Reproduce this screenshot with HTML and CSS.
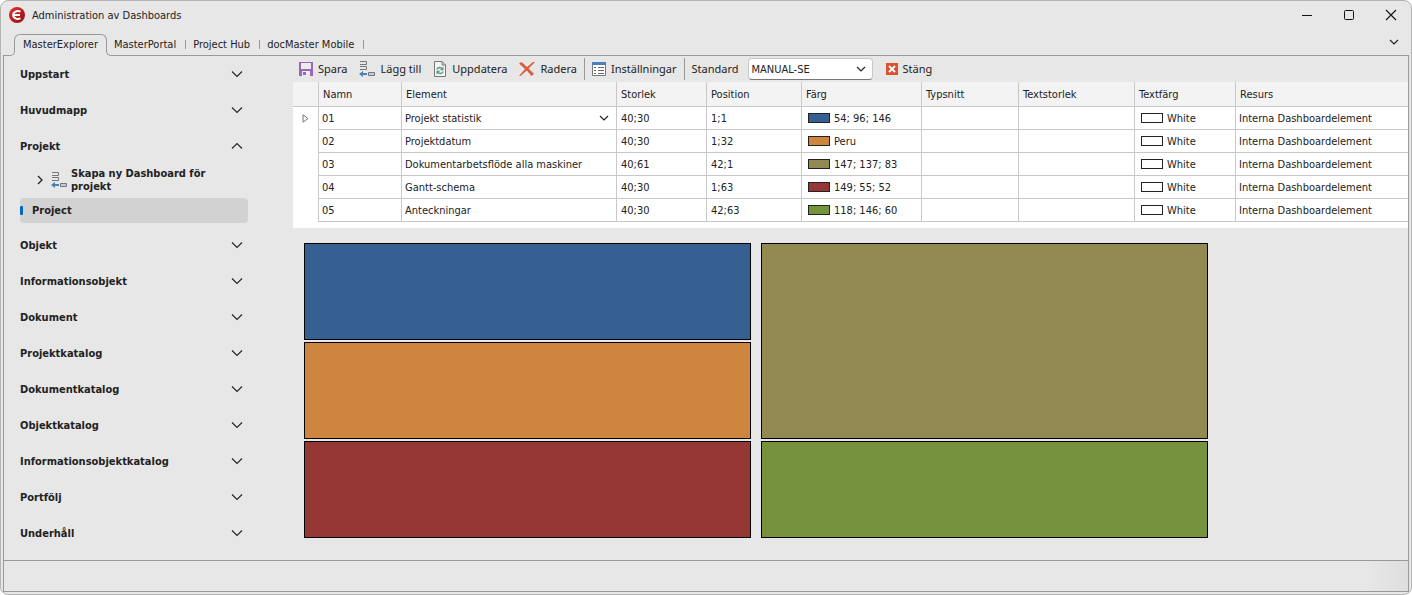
FILE: index.html
```html
<!DOCTYPE html>
<html lang="sv">
<head>
<meta charset="utf-8">
<title>Administration av Dashboards</title>
<link rel="stylesheet" href="styles.css">
</head>
<body>
<svg class="defs" aria-hidden="true">
  <symbol id="down" viewBox="0 0 12 12"><path d="M1 3.500 6 8.500 11 3.500" fill="none" stroke="#222" stroke-width="1.100"/></symbol>
  <symbol id="up" viewBox="0 0 12 12"><path d="M1 8.500 6 3.500 11 8.500" fill="none" stroke="#222" stroke-width="1.100"/></symbol>
  <symbol id="small" viewBox="0 0 10 10"><path d="M1 3 5 7 9 3" fill="none" stroke="#222" stroke-width="1.200"/></symbol>
  <symbol id="add" viewBox="0 0 16 16"><path d="M1 .5h6.500v3H1M1 5.500h6.500v3H1" fill="none" stroke="#777"/><path d="M0 13 4 10v2h4v2H4v2z" fill="#4a80bd"/><path d="M9.500 11.500h6v3h-6z" fill="#b9cfe6" stroke="#777"/></symbol>
</svg>
<div class="window">
  <header class="titlebar">
    <svg class="logo" viewBox="0 0 16 16"><defs><linearGradient id="red" x2="1" y2="1"><stop stop-color="#e5332f"/><stop offset="1" stop-color="#8e0f14"/></linearGradient></defs><circle cx="8" cy="8" r="8" fill="url(#red)"/><path d="M11.500 4.600Q9.500 3.800 7.500 4.200 4.200 5 4.200 8t3.300 3.800q2 .4 4-.4M5 8h6" fill="none" stroke="#fff" stroke-width="2"/></svg>
    <h1>Administration av Dashboards</h1>
    <div class="controls">
      <button aria-label="Minimera"><svg viewBox="0 0 12 12"><path d="M1 6.500h10" stroke="#111"/></svg></button>
      <button aria-label="Maximera"><svg viewBox="0 0 12 12"><rect x="1.500" y="1.500" width="9" height="9" rx="1" fill="none" stroke="#111"/></svg></button>
      <button aria-label="Stäng fönster"><svg viewBox="0 0 12 12"><path d="m1 1 10 10M11 1 1 11" stroke="#111" stroke-width="1.100"/></svg></button>
    </div>
  </header>
  <div class="tabs">
    <button class="tab active">MasterExplorer</button>
    <button class="tab">MasterPortal</button>
    <button class="tab">Project Hub</button>
    <button class="tab">docMaster Mobile</button>
    <button class="more" aria-label="Fler flikar"><svg><use href="#small"/></svg></button>
  </div>
  <div class="frame">
    <div class="main">
      <nav class="sidebar">
        <button class="group">Uppstart<svg><use href="#down"/></svg></button>
        <button class="group">Huvudmapp<svg><use href="#down"/></svg></button>
        <button class="group">Projekt<svg><use href="#up"/></svg></button>
        <button class="child"><svg class="expand" viewBox="0 0 6 10"><path d="M1 1 5 5 1 9" fill="none" stroke="#222" stroke-width="1.300"/></svg><svg class="icon"><use href="#add"/></svg><span>Skapa ny Dashboard för projekt</span></button>
        <button class="selected">Project</button>
        <button class="group">Objekt<svg><use href="#down"/></svg></button>
        <button class="group">Informationsobjekt<svg><use href="#down"/></svg></button>
        <button class="group">Dokument<svg><use href="#down"/></svg></button>
        <button class="group">Projektkatalog<svg><use href="#down"/></svg></button>
        <button class="group">Dokumentkatalog<svg><use href="#down"/></svg></button>
        <button class="group">Objektkatalog<svg><use href="#down"/></svg></button>
        <button class="group">Informationsobjektkatalog<svg><use href="#down"/></svg></button>
        <button class="group">Portfölj<svg><use href="#down"/></svg></button>
        <button class="group">Underhåll<svg><use href="#down"/></svg></button>
      </nav>
      <main class="content">
        <div class="toolbar">
          <button><svg viewBox="0 0 14 14"><path d="M0 0h14v14H0z" fill="#9867b7"/><path d="M2 1h10v6H2zM3 9h8v5H3z" fill="#ececec"/><path d="M4 10h3v3H4z" fill="#9867b7"/></svg>Spara</button>
          <button><svg class="icon"><use href="#add"/></svg>Lägg till</button>
          <button><svg class="page" viewBox="0 0 14 16"><path d="M1.500.5H9l3.500 3.500v11.500h-11zM9 .5V4h3.500" fill="#f4f4f4" stroke="#777"/><path d="M3.800 8.500Q5 6 7.500 6.600l1.500.8M10.300 10.500Q9 13 6.500 12.400L5 11.600" fill="none" stroke="#4f9a7d" stroke-width="1.300"/><path d="M10.500 5.500v3.800H6.800zM3.500 13.500V9.700h3.700z" fill="#4f9a7d"/></svg>Uppdatera</button>
          <button><svg class="icon" viewBox="0 0 16 14"><path d="M0 1.500 2.500 0 8 5 14 0h2L9.500 6.500 15 12l-2.500 2L7.800 8.500 1.500 14H0l6-7z" fill="#dc5b3c"/></svg>Radera</button>
          <span class="divider"></span>
          <button><svg viewBox="0 0 14 14"><path d="M.5.5h13v13H.5z" fill="#fff" stroke="#777"/><path d="M0 0h14v3H0z" fill="#4a80bd"/><path d="M2 5.500h2M2 8.500h2M2 11.500h2M6 5.500h6M6 8.500h6M6 11.500h6" stroke="#666"/></svg>Inställningar</button>
          <span class="divider"></span>
          <label for="profile">Standard</label>
          <span class="combo"><select id="profile"><option>MANUAL-SE</option></select><svg><use href="#small"/></svg></span>
          <button class="close"><svg viewBox="0 0 12 12"><path d="M0 0h12v12H0z" fill="#d9532f"/><path d="m3 3 6 6M9 3 3 9" stroke="#fff" stroke-width="1.800"/></svg>Stäng</button>
        </div>
        <div class="table-area">
          <table>
            <colgroup><col class="c-mark"><col class="c-name"><col class="c-element"><col class="c-size"><col class="c-pos"><col class="c-color"><col class="c-font"><col class="c-textsize"><col class="c-textcolor"><col></colgroup>
            <thead><tr><th></th><th>Namn</th><th>Element</th><th>Storlek</th><th>Position</th><th>Färg</th><th>Typsnitt</th><th>Textstorlek</th><th>Textfärg</th><th>Resurs</th></tr></thead>
            <tbody>
              <tr><td><svg class="marker" viewBox="0 0 7 9"><path d="M1 .8 6 4.500 1 8.200z" fill="none" stroke="#777"/></svg></td><td>01</td><td><span class="cell-combo"><select aria-label="Element"><option>Projekt statistik</option></select><svg><use href="#small"/></svg></span></td><td>40;30</td><td>1;1</td><td><i class="swatch blue"></i>54; 96; 146</td><td></td><td></td><td><i class="swatch white"></i>White</td><td>Interna Dashboardelement</td></tr>
              <tr><td></td><td>02</td><td>Projektdatum</td><td>40;30</td><td>1;32</td><td><i class="swatch peru"></i>Peru</td><td></td><td></td><td><i class="swatch white"></i>White</td><td>Interna Dashboardelement</td></tr>
              <tr><td></td><td>03</td><td>Dokumentarbetsflöde alla maskiner</td><td>40;61</td><td>42;1</td><td><i class="swatch olive"></i>147; 137; 83</td><td></td><td></td><td><i class="swatch white"></i>White</td><td>Interna Dashboardelement</td></tr>
              <tr><td></td><td>04</td><td>Gantt-schema</td><td>40;30</td><td>1;63</td><td><i class="swatch red"></i>149; 55; 52</td><td></td><td></td><td><i class="swatch white"></i>White</td><td>Interna Dashboardelement</td></tr>
              <tr><td></td><td>05</td><td>Anteckningar</td><td>40;30</td><td>42;63</td><td><i class="swatch green"></i>118; 146; 60</td><td></td><td></td><td><i class="swatch white"></i>White</td><td>Interna Dashboardelement</td></tr>
            </tbody>
          </table>
        </div>
        <div class="board">
          <div class="tile blue"></div>
          <div class="tile tall olive"></div>
          <div class="tile peru"></div>
          <div class="tile red"></div>
          <div class="tile green"></div>
        </div>
      </main>
    </div>
    <footer class="status"></footer>
  </div>
</div>
</body>
</html>
```
FILE: styles.css
```css
* { box-sizing: border-box; }
body { margin: 0; background: #fff; color: #222; font: 11px/13px "DejaVu Sans Condensed", "DejaVu Sans", sans-serif; }
button, select { margin: 0; padding: 0; border: 0; background: none; color: inherit; font: inherit; }
svg { display: block; flex: none; width: 12px; height: 12px; overflow: visible; }
.defs { position: absolute; width: 0; height: 0; }
.window { display: flex; flex-direction: column; min-height: 100vh; padding: 0 2px 2px; border: 1px solid #b4b4b4; border-radius: 8px; background: #e7e7e7; }

.titlebar { display: flex; align-items: center; height: 28px; padding-left: 6px; }
.titlebar .logo { width: 16px; height: 16px; }
h1 { margin: 0 0 0 7px; font: inherit; }
.controls { display: flex; margin: 0 -3px 0 auto; }
.controls button { display: grid; place-items: center; width: 42px; height: 28px; }

.tabs { display: flex; height: 26px; padding: 5px 0 0 11px; }
.tab { position: relative; display: flex; align-items: center; margin-right: 7px; }
.tab:not(.active)::after { content: ""; width: 1px; height: 9px; margin-left: 9px; background: #999; }
.tab.active { z-index: 1; height: 22px; padding: 0 8px 2px; border: 1px solid #999; border-bottom: 0; border-radius: 6px 6px 0 0; background: #e7e7e7; }
.tab.active::before, .tab.active::after { content: ""; position: absolute; bottom: 0; width: 5px; height: 5px; border-bottom: 1px solid #999; background: #e7e7e7; }
.tab.active::before { right: 100%; border-right: 1px solid #999; border-bottom-right-radius: 5px; box-shadow: 2px 2px 0 #e7e7e7; }
.tab.active::after { left: 100%; border-left: 1px solid #999; border-bottom-left-radius: 5px; box-shadow: -2px 2px 0 #e7e7e7; }
.more { margin: 0 10px 5px auto; }
.more svg, .combo svg, .cell-combo svg { width: 10px; height: 10px; }

.frame { display: flex; flex: 1; flex-direction: column; border: 1px solid #999; }
.main { display: flex; flex: 1; }
.sidebar { display: flex; flex: none; flex-direction: column; width: 289px; padding-left: 16px; font-weight: bold; }
.group { display: flex; align-items: center; justify-content: space-between; width: 223px; height: 36px; }
.child { display: flex; align-items: center; width: 228px; height: 34px; padding: 0 0 2px 17px; text-align: left; }
.child .expand { width: 6px; height: 10px; margin-right: 8px; }
.icon { width: 16px; height: 16px; }
.child span { margin-left: 4px; }
.selected { display: flex; align-items: center; width: 228px; height: 25px; margin-bottom: 4px; border-radius: 4px; background: #d2d2d2; }
.selected::before { content: ""; width: 3px; height: 9px; margin-right: 9px; border-radius: 1px; background: #0067c0; }

.content { flex: 1; min-width: 0; }
.toolbar { display: flex; align-items: center; height: 26px; padding-left: 6px; font: 11px/16px "Noto Sans", sans-serif; white-space: nowrap; }
.toolbar button { display: flex; align-items: center; gap: 5px; margin-right: 12px; }
.toolbar button svg { width: 14px; height: 14px; }
.toolbar button .icon { width: 16px; height: 16px; }
.toolbar button .page { height: 16px; }
.divider { width: 1px; height: 22px; margin: 0 7px 0 -5px; background: #999; }
.combo, .cell-combo { position: relative; display: block; }
.combo { width: 125px; margin: 0 13px 0 9px; }
.combo select { appearance: none; display: block; width: 100%; height: 22px; padding-left: 3px; border: 1px solid #c8c8c8; border-bottom-color: #777; border-radius: 4px; background: #fff; font: 11px/13px "DejaVu Sans Condensed", sans-serif; }
.combo svg, .cell-combo svg { position: absolute; top: 6px; right: 7px; pointer-events: none; }
.toolbar .close svg { width: 12px; height: 12px; }

.table-area { padding-bottom: 6px; background: #fff; }
table { width: 100%; border-collapse: separate; border-spacing: 0; table-layout: fixed; }
th, td { padding: 0 0 0 4px; border-right: 1px solid #c8c8c8; border-bottom: 1px solid #c8c8c8; text-align: left; white-space: nowrap; }
th { height: 25px; background: #f3f3f3; font-weight: normal; }
td { height: 23px; padding-left: 3px; }
tbody td:first-child { padding-left: 9px; border-bottom: 0; }
th:last-child, td:last-child { border-right: 0; }
td:nth-child(4), td:nth-child(5) { padding-left: 4px; }
.c-mark { width: 26px; }
.c-name { width: 83px; }
.c-element { width: 215px; }
.c-size { width: 90px; }
.c-pos { width: 95px; }
.c-color { width: 120px; }
.c-font { width: 97px; }
.c-textsize { width: 116px; }
.c-textcolor { width: 101px; }
.marker { width: 7px; height: 9px; }
.cell-combo select { appearance: none; width: 100%; height: 22px; }
.swatch { display: inline-block; width: 22px; height: 10px; margin: 0 4px 0 3px; border: 1px solid #222; vertical-align: -1px; }

.board { display: grid; grid-template-columns: repeat(2, minmax(0, 447px)); grid-auto-rows: 97px; gap: 2px 10px; padding: 15px 11px 22px; }
.tile { border: 1px solid #000; }
.tall { grid-row: span 2; }
.blue { background: #366092; }
.peru { background: #cd853f; }
.olive { background: #938953; }
.red { background: #953734; }
.green { background: #76923c; }
.white { background: #fff; }
.status { height: 31px; border-top: 1px solid #999; background: linear-gradient(to left, #dedede, #e7e7e7 40px); }
```
